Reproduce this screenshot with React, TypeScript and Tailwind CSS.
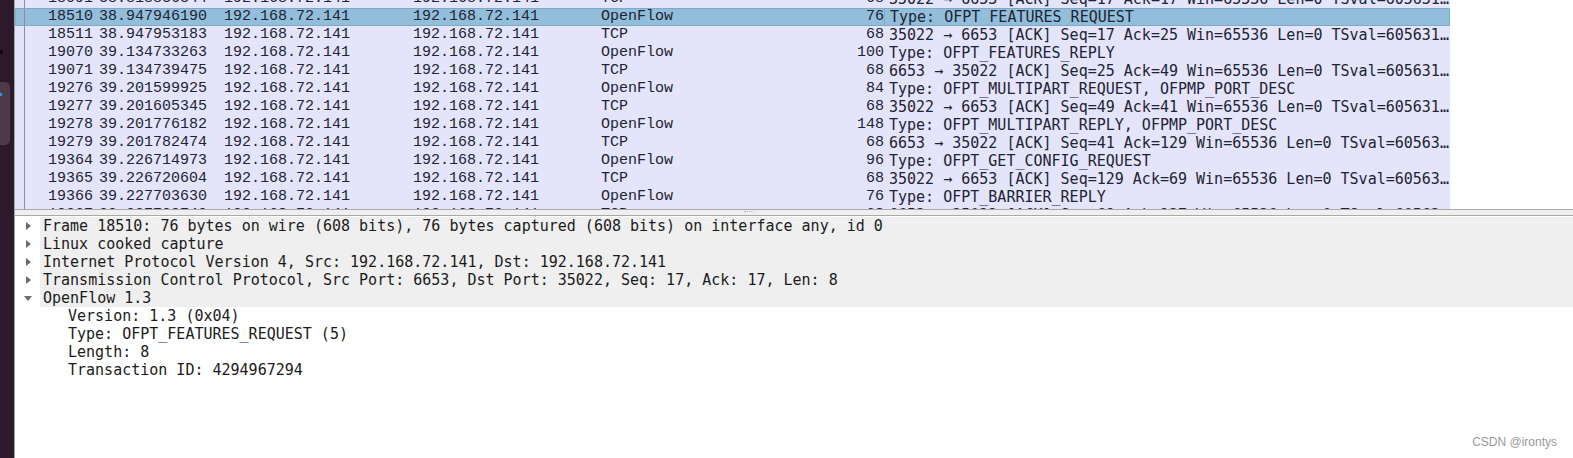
import React from 'react';

interface Packet {
    no: string;
    time: string;
    src: string;
    dst: string;
    proto: string;
    len: string;
    info: string;
    selected?: boolean;
}

const IP = '192.168.72.141';

const packets: Packet[] = [
    { no: '18091', time: '38.818836344', src: IP, dst: IP, proto: 'TCP', len: '68', info: '35022 → 6653 [ACK] Seq=17 Ack=17 Win=65536 Len=0 TSval=605631…' },
    { no: '18510', time: '38.947946190', src: IP, dst: IP, proto: 'OpenFlow', len: '76', info: 'Type: OFPT_FEATURES_REQUEST', selected: true },
    { no: '18511', time: '38.947953183', src: IP, dst: IP, proto: 'TCP', len: '68', info: '35022 → 6653 [ACK] Seq=17 Ack=25 Win=65536 Len=0 TSval=605631…' },
    { no: '19070', time: '39.134733263', src: IP, dst: IP, proto: 'OpenFlow', len: '100', info: 'Type: OFPT_FEATURES_REPLY' },
    { no: '19071', time: '39.134739475', src: IP, dst: IP, proto: 'TCP', len: '68', info: '6653 → 35022 [ACK] Seq=25 Ack=49 Win=65536 Len=0 TSval=605631…' },
    { no: '19276', time: '39.201599925', src: IP, dst: IP, proto: 'OpenFlow', len: '84', info: 'Type: OFPT_MULTIPART_REQUEST, OFPMP_PORT_DESC' },
    { no: '19277', time: '39.201605345', src: IP, dst: IP, proto: 'TCP', len: '68', info: '35022 → 6653 [ACK] Seq=49 Ack=41 Win=65536 Len=0 TSval=605631…' },
    { no: '19278', time: '39.201776182', src: IP, dst: IP, proto: 'OpenFlow', len: '148', info: 'Type: OFPT_MULTIPART_REPLY, OFPMP_PORT_DESC' },
    { no: '19279', time: '39.201782474', src: IP, dst: IP, proto: 'TCP', len: '68', info: '6653 → 35022 [ACK] Seq=41 Ack=129 Win=65536 Len=0 TSval=60563…' },
    { no: '19364', time: '39.226714973', src: IP, dst: IP, proto: 'OpenFlow', len: '96', info: 'Type: OFPT_GET_CONFIG_REQUEST' },
    { no: '19365', time: '39.226720604', src: IP, dst: IP, proto: 'TCP', len: '68', info: '35022 → 6653 [ACK] Seq=129 Ack=69 Win=65536 Len=0 TSval=60563…' },
    { no: '19366', time: '39.227703630', src: IP, dst: IP, proto: 'OpenFlow', len: '76', info: 'Type: OFPT_BARRIER_REPLY' },
    { no: '19367', time: '39.227709740', src: IP, dst: IP, proto: 'TCP', len: '68', info: '6653 → 35022 [ACK] Seq=69 Ack=137 Win=65536 Len=0 TSval=60563…' },
];

const tree = [
    { label: 'Frame 18510: 76 bytes on wire (608 bits), 76 bytes captured (608 bits) on interface any, id 0', open: false },
    { label: 'Linux cooked capture', open: false },
    { label: 'Internet Protocol Version 4, Src: 192.168.72.141, Dst: 192.168.72.141', open: false },
    { label: 'Transmission Control Protocol, Src Port: 6653, Dst Port: 35022, Seq: 17, Ack: 17, Len: 8', open: false },
    { label: 'OpenFlow 1.3', open: true },
];

const children = ['Version: 1.3 (0x04)', 'Type: OFPT_FEATURES_REQUEST (5)', 'Length: 8', 'Transaction ID: 4294967294'];

const PacketRow: React.FC<{ p: Packet }> = ({ p }) => (
    <div
        className={
            'flex h-[18px] w-[1435px] items-center whitespace-nowrap text-[15px] leading-[18px] text-[#1e2433] ' +
            (p.selected ? 'bg-[#93bedb] outline outline-1 -outline-offset-1 outline-[#7fa9c9]' : 'bg-[#e4e4fb]')
        }
    >
        <div className="w-[9px] shrink-0" />
        <div className="h-full w-px shrink-0 bg-[#8e8e9a]" />
        <div className="w-[68px] shrink-0 text-right">{p.no}</div>
        <div className="w-[125px] shrink-0 pl-[6px]">{p.time}</div>
        <div className="w-[189px] shrink-0 pl-[6px]">{p.src}</div>
        <div className="w-[188px] shrink-0 pl-[6px]">{p.dst}</div>
        <div className="w-[197px] shrink-0 pl-[6px]">{p.proto}</div>
        <div className="w-[92px] shrink-0 text-right">{p.len}</div>
        <div
            className={
                'h-full flex-1 pl-[5px] font-["DejaVu_Sans_Mono",monospace] text-[15px] ' +
                (p.selected ? 'border-l border-[#7fa9c9]' : '')
            }
        >
            {p.info}
        </div>
    </div>
);

const Arrow: React.FC<{ open: boolean }> = ({ open }) => (
    <svg width="10" height="10" viewBox="0 0 10 10" className="shrink-0">
        {open ? <path d="M1 3 L9 3 L5 8 Z" fill="#6b6b6b" /> : <path d="M3 1 L8 5 L3 9 Z" fill="#6b6b6b" />}
    </svg>
);

export default function App() {
    return (
        <div className="flex h-[458px] w-[1573px] overflow-hidden bg-white font-['Liberation_Mono',monospace]">
            <aside className="flex w-[14px] shrink-0 flex-col bg-[#2c1a2c]">
                <div className="mt-[50px] h-[4px] w-[3px] bg-[#120a12]" />
                <div className="mt-[28px] flex h-[63px] w-[10px] flex-col rounded-r-[5px] bg-[#4a3a4a]">
                    <div className="mt-[11px] h-[3px] w-[2px] bg-[#3b8fe0]" />
                </div>
            </aside>
            <main className="flex min-w-0 flex-1 flex-col border-l border-[#a3a3a3]">
                <section className="h-[209px] shrink-0 overflow-hidden">
                    <div className="-mt-[10px]">
                        {packets.map((p) => (
                            <PacketRow key={p.no} p={p} />
                        ))}
                    </div>
                </section>
                <div className="flex h-[7px] shrink-0 items-start justify-center border-y border-[#a9a9a9] bg-[#efefef] pr-[90px]">
                    <div className="mt-[1px] h-px w-[10px] border-t border-dotted border-[#b5b5b5]" />
                </div>
                <section className="flex-1 pt-[1px] text-[15px] leading-[18px] text-[#1b1b1b]">
                    {tree.map((t) => (
                        <div key={t.label} className="flex h-[18px] items-center">
                            <div className="flex w-[25px] shrink-0 justify-center">
                                <Arrow open={t.open} />
                            </div>
                            <div className="h-full flex-1 whitespace-nowrap bg-[#efefef] pl-[3px] font-['DejaVu_Sans_Mono',monospace]">
                                {t.label}
                            </div>
                        </div>
                    ))}
                    {children.map((c) => (
                        <div key={c} className="h-[18px] whitespace-nowrap pl-[53px] font-['DejaVu_Sans_Mono',monospace]">
                            {c}
                        </div>
                    ))}
                </section>
                <div className="flex justify-end pb-[7px] pr-[16px] font-['Liberation_Sans',sans-serif] text-[12px] text-[#9a9a9a]">
                    CSDN @irontys
                </div>
            </main>
        </div>
    );
}
